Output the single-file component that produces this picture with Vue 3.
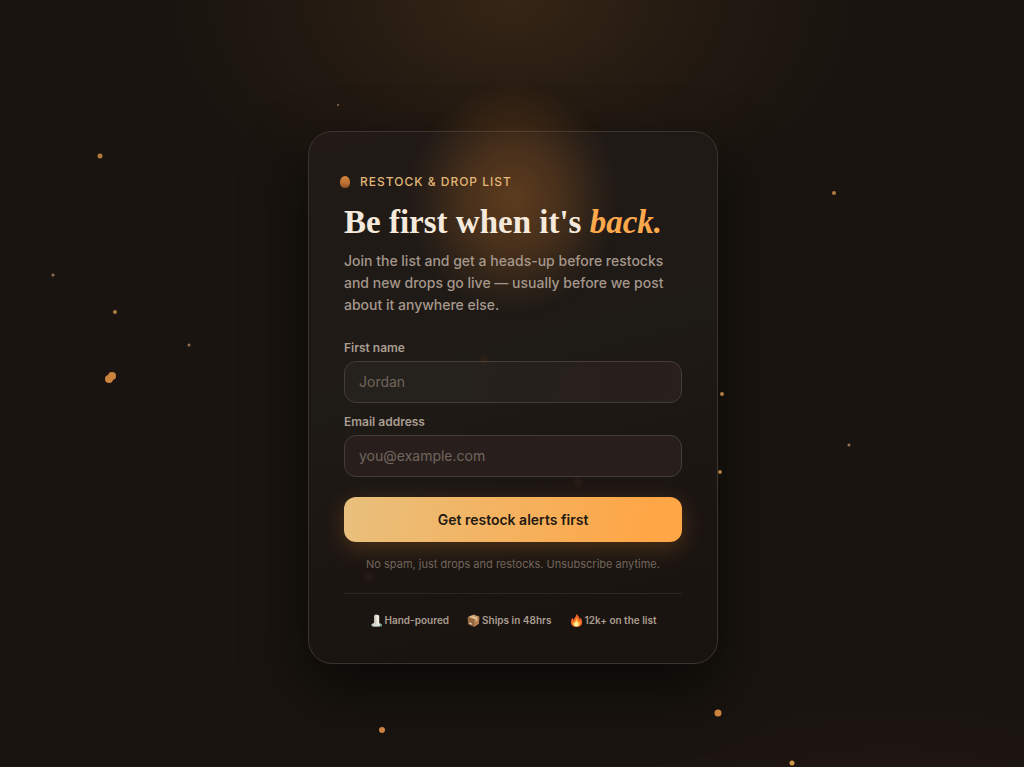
<script setup>
import { ref } from 'vue'

const firstName = ref('')
const email = ref('')

const embers = [
  { x: 33, y: 13.7, size: 2, tone: 'dim' },
  { x: 9.8, y: 20.4, size: 5, tone: 'warm' },
  { x: 81.4, y: 25.1, size: 4, tone: 'warm' },
  { x: 5.2, y: 35.8, size: 3, tone: 'dim' },
  { x: 11.2, y: 40.7, size: 4, tone: 'warm' },
  { x: 18.5, y: 45, size: 3, tone: 'dim' },
  { x: 10.9, y: 49, size: 8, tone: 'bright' },
  { x: 10.6, y: 49.4, size: 8, tone: 'bright' },
  { x: 70.5, y: 51.4, size: 4, tone: 'warm' },
  { x: 82.9, y: 58, size: 3, tone: 'dim' },
  { x: 70.3, y: 61.5, size: 4, tone: 'warm' },
  { x: 47.3, y: 46.9, size: 9, tone: 'veiled' },
  { x: 56.4, y: 62.9, size: 8, tone: 'veiled' },
  { x: 36, y: 75.2, size: 8, tone: 'veiled' },
  { x: 37.3, y: 95.2, size: 6, tone: 'bright' },
  { x: 70.1, y: 92.9, size: 7, tone: 'bright' },
  { x: 77.3, y: 99.5, size: 5, tone: 'gold' }
]
</script>

<template>
  <main class="page">
    <section class="card">
      <div class="halo" aria-hidden="true"></div>
      <p class="eyebrow"><span class="wick" aria-hidden="true"></span>RESTOCK &amp; DROP LIST</p>
      <h1>Be first when it's <em>back.</em></h1>
      <p class="intro">
        Join the list and get a heads-up before restocks and new drops go live — usually before we post about it
        anywhere else.
      </p>
      <form @submit.prevent>
        <label for="first-name">First name</label>
        <input id="first-name" v-model="firstName" type="text" placeholder="Jordan" />
        <label for="email">Email address</label>
        <input id="email" v-model="email" type="email" placeholder="you@example.com" />
        <button type="submit">Get restock alerts first</button>
      </form>
      <p class="note">No spam, just drops and restocks. Unsubscribe anytime.</p>
      <ul class="trust">
        <li>
          <svg viewBox="0 0 24 24" aria-hidden="true">
            <path d="M2 20c1-3 5-4 10-4s9 1 9 4-4 4-10 4-9-1-9-4z" fill="#8f9696" />
            <path d="M4 19c1-2 4-2 8-2s7 0 8 2l-1 3c-3 1-11 1-14 0z" fill="#d5dad6" />
            <path d="M8 3c2-2 7-2 9 0v16c-2 2-7 2-9 0z" fill="#f3eee4" />
            <path d="M8 3c1-1 2-2 4-2v19c-2 0-3 0-4-1z" fill="#d3cdc4" />
            <path d="M19 19h3v4h-3z" fill="#63a986" />
          </svg>
          Hand-poured
        </li>
        <li>
          <svg viewBox="0 0 24 24" aria-hidden="true">
            <path d="M1 6l11-5 11 4-10 6z" fill="#c99d6c" />
            <path d="M1 6l12 5v13L2 19z" fill="#93663f" />
            <path d="M13 11l10-6-1 13-9 6z" fill="#b78250" />
            <path d="M5 4l11 5v5l3-2V7L8 3z" fill="#e2c697" />
            <path d="M4 15l5 2v3l-5-2z" fill="#d8c7ad" />
          </svg>
          Ships in 48hrs
        </li>
        <li>
          <svg viewBox="0 0 24 24" aria-hidden="true">
            <path d="M12 0c3 3 6 6 6 10l2-3c2 4 3 7 2 11-1 4-5 6-10 6S3 22 2 17c-1-4 1-7 2-10l3 4C7 7 12 5 12 0z" fill="#ef642c" />
            <path d="M12 6c1 4 5 6 5 9l2-2c1 6-2 10-7 10s-8-3-7-9l3 2c0-4 4-5 4-10z" fill="#ffac31" />
            <path d="M12 13c1 2 4 4 4 6 0 3-2 4-4 4s-5-1-5-4c0-2 4-3 5-6z" fill="#fff0a0" />
          </svg>
          12k+ on the list
        </li>
      </ul>
    </section>
    <div class="embers" aria-hidden="true">
      <i
        v-for="(e, index) in embers"
        :key="index"
        :class="e.tone"
        :style="{ left: e.x + '%', top: e.y + '%', width: e.size + 'px', height: e.size + 'px' }"
      ></i>
    </div>
  </main>
</template>

<style>
body {
  margin: 0;
  background: #19140f;
}
</style>

<style scoped>
.page {
  position: relative;
  box-sizing: border-box;
  min-height: 100vh;
  padding: 68px 20px 40px 22px;
  display: flex;
  align-items: center;
  justify-content: center;
  overflow: hidden;
  font-family: Inter, "Liberation Sans", sans-serif;
  color: #f5e9dc;
  background:
    radial-gradient(ellipse 34% 30% at 50% 0, rgba(255, 160, 60, 0.12), rgba(255, 140, 70, 0.04) 60%, transparent),
    radial-gradient(ellipse 30% 14% at 87% 104%, rgba(80, 30, 50, 0.14), transparent),
    #19140f;
}

.embers {
  position: absolute;
  inset: 0;
  pointer-events: none;
}

.embers i {
  position: absolute;
  border-radius: 50%;
  transform: translate(-50%, -50%);
  background: #b07a3f;
}

.embers .bright {
  background: #cd8340;
}

.embers .gold {
  background: #cd9848;
}

.embers .dim {
  background: #917154;
}

.embers .veiled {
  background: rgba(190, 110, 60, 0.09);
  filter: blur(2px);
}

.card {
  position: relative;
  box-sizing: border-box;
  width: 100%;
  max-width: 410px;
  padding: 40px 35px 35px;
  border: 1px solid #3b332d;
  border-radius: 24px;
  background: linear-gradient(165deg, #211a17 0%, #1e1a16 45%, #1c1613 65%, #19130f 100%);
  box-shadow: 0 24px 60px rgba(0, 0, 0, 0.6);
}

.halo {
  position: absolute;
  left: 50%;
  top: -48px;
  width: 210px;
  height: 230px;
  transform: translateX(-50%);
  background: radial-gradient(ellipse closest-side, rgba(255, 150, 50, 0.28), rgba(255, 150, 50, 0.18) 45%, rgba(255, 150, 50, 0.06) 80%, transparent);
  filter: blur(6px);
  pointer-events: none;
}

.eyebrow,
h1,
.intro,
form,
.note,
.trust {
  position: relative;
}

p,
h1,
ul {
  margin: 0;
}

.eyebrow {
  display: flex;
  align-items: center;
  gap: 10px;
  margin-left: -4px;
  font-size: 12px;
  line-height: 20px;
  font-weight: 500;
  letter-spacing: 1px;
  color: #e2b777;
}

.wick {
  width: 10px;
  height: 12px;
  border-radius: 50% 50% 45% 45%;
  background: linear-gradient(#d7863b, #b66d33 65%, #8c4c23);
}

h1 {
  margin-top: 10px;
  font-family: "Liberation Serif", serif;
  font-size: 33px;
  line-height: 40px;
  font-weight: 700;
  white-space: nowrap;
}

h1 em {
  color: #ffa94d;
}

.intro {
  margin-top: 8px;
  font-size: 14px;
  line-height: 22px;
  font-weight: 500;
  color: #a4978b;
}

form {
  display: flex;
  flex-direction: column;
  margin-top: 24px;
}

label {
  margin-bottom: 5px;
  font-size: 12px;
  line-height: 16px;
  font-weight: 600;
  color: #aa9d91;
}

input {
  box-sizing: border-box;
  width: 100%;
  height: 42px;
  padding: 0 14px 2px;
  border: 1px solid #443c36;
  border-radius: 12px;
  outline: none;
  background: linear-gradient(100deg, #25211c 35%, #291f1d);
  font: 400 14px Inter, "Liberation Sans", sans-serif;
  color: #f5e9dc;
}

input + label {
  margin-top: 11px;
}

input[type='email'] {
  background: #281f1c;
}

input::placeholder {
  color: #71665d;
  opacity: 1;
}

input:focus {
  border-color: #ffa94d;
}

button {
  height: 45px;
  margin-top: 20px;
  border: 0;
  border-radius: 12px;
  background: linear-gradient(100deg, #e8c07d, #ffa646 90%);
  box-shadow: 0 6px 22px rgba(255, 150, 50, 0.22);
  font: 600 14px Inter, "Liberation Sans", sans-serif;
  color: #241a12;
  cursor: pointer;
}

.note {
  margin-top: 14px;
  font-size: 11px;
  line-height: 16px;
  text-align: center;
  color: #71665d;
}

.trust {
  display: flex;
  justify-content: center;
  gap: 18px;
  margin-top: 21px;
  padding: 18px 0 0;
  border-top: 1px solid #2c2520;
  list-style: none;
}

.trust li {
  display: flex;
  align-items: center;
  gap: 2px;
  font-size: 10px;
  line-height: 16px;
  font-weight: 600;
  color: #aa9d91;
  white-space: nowrap;
}

.trust svg {
  width: 13px;
  height: 13px;
}
</style>
